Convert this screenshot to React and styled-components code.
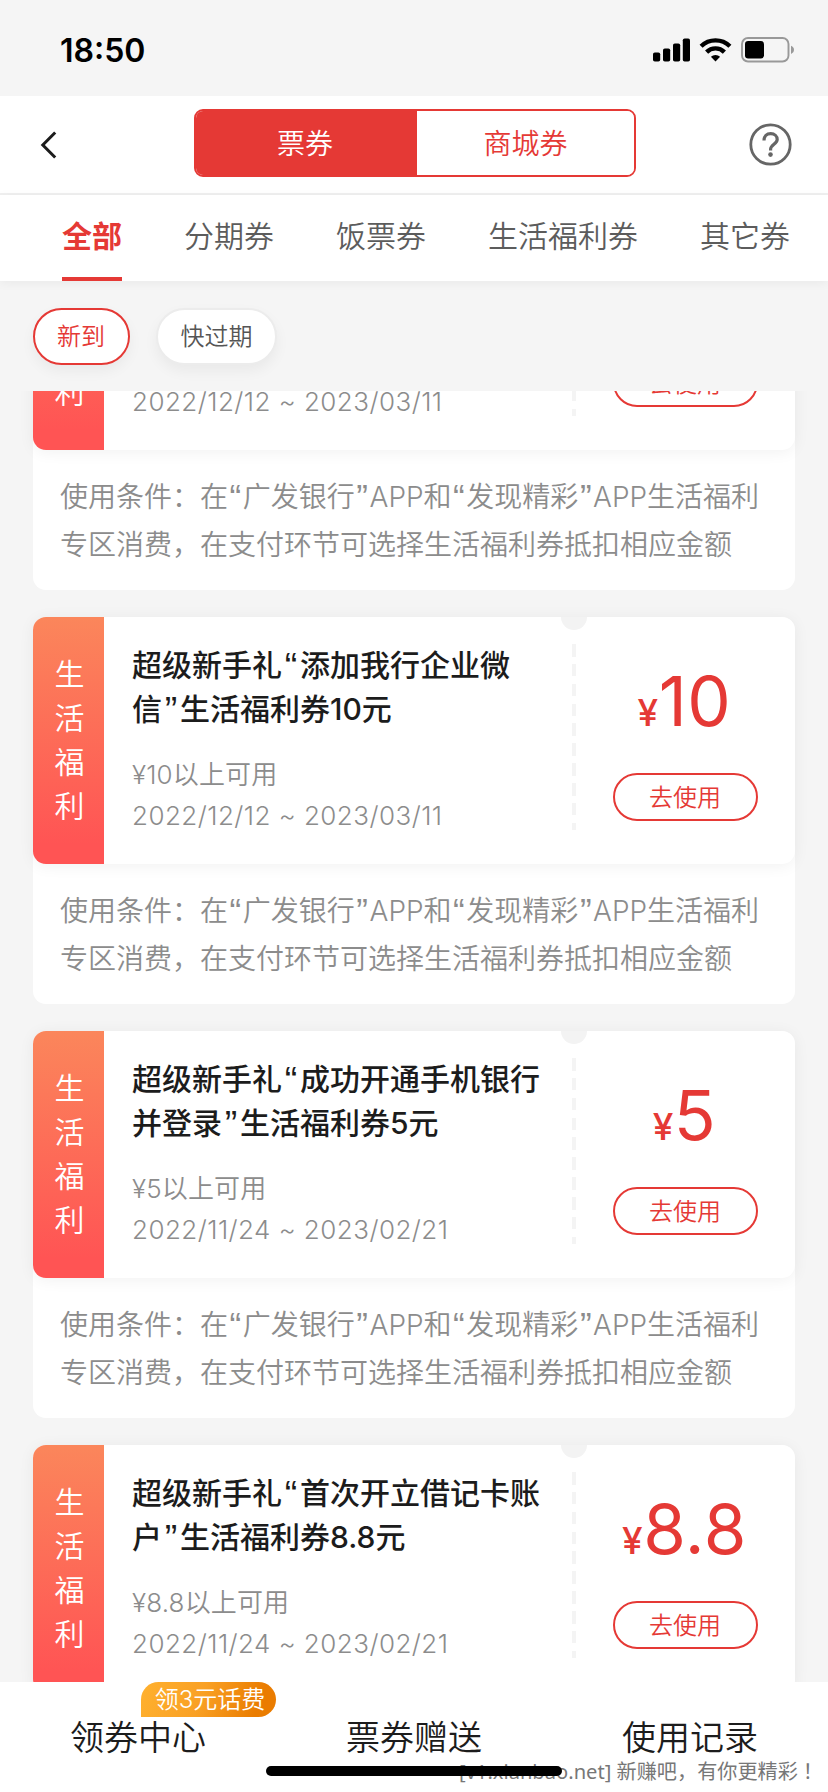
import React from "react";
import styled, { createGlobalStyle } from "styled-components";

const RED = "#e53935";

const Global = createGlobalStyle`
  *, *::before, *::after { box-sizing: border-box; }
  html, body { margin: 0; padding: 0; background: #f5f5f5; }
  body { font-family: Inter, "Noto Sans CJK SC", sans-serif; overflow: hidden; }
  button { font-family: inherit; margin: 0; padding: 0; background: none; border: 0; }
`;

const Screen = styled.div`
  width: 828px;
  height: 1792px;
  display: flex;
  flex-direction: column;
  overflow: hidden;
  background: #f5f5f5;
  position: relative;
`;

const StatusBar = styled.div`
  flex: none;
  height: 96px;
  padding: 3px 33px 0 60px;
  display: flex;
  align-items: center;
  justify-content: space-between;
`;

const Clock = styled.div`
  padding-top: 2px;
  font-size: 32px;
  font-weight: 600;
  color: #000;
`;

const StatusIcons = styled.div`
  display: flex;
  align-items: center;
  gap: 9px;
  svg { display: block; }
`;

const Header = styled.header`
  flex: none;
  height: 99px;
  padding: 0 36px 0 40px;
  background: #fff;
  border-bottom: 2px solid #f0f0f0;
  display: flex;
  align-items: center;
  justify-content: space-between;
`;

const IconButton = styled.button`
  width: 43px;
  height: 43px;
  display: flex;
  align-items: center;
  justify-content: ${(p) => p.$align || "center"};
  svg { display: block; }
`;

const Segmented = styled.div`
  width: 442px;
  height: 68px;
  margin: 0 auto 3px 111px;
  display: flex;
  border: 2px solid ${RED};
  border-radius: 9px;
  overflow: hidden;
`;

const Segment = styled.button`
  flex: ${(p) => (p.$active ? "0 0 221px" : "1")};
  font-size: 28px;
  font-weight: 350;
  padding: 0 ${(p) => (p.$active ? 3 : 0)}px 2px 0;
  color: ${(p) => (p.$active ? "#fff" : RED)};
  background: ${(p) => (p.$active ? RED : "#fff")};
`;

const Tabs = styled.nav`
  flex: none;
  height: 86px;
  padding-left: 62px;
  background: #fff;
  display: flex;
  gap: 62px;
  box-shadow: 0 2px 10px rgba(0, 0, 0, 0.05);
`;

const Tab = styled.button`
  flex: none;
  font-size: 30px;
  font-weight: ${(p) => (p.$active ? 600 : 350)};
  color: ${(p) => (p.$active ? RED : "#5c5c5c")};
  padding: 0 0 5px;
  border-bottom: 4px solid ${(p) => (p.$active ? RED : "transparent")};
`;

const Filters = styled.div`
  flex: none;
  height: 110px;
  padding: 27px 33px 0;
  display: flex;
  align-items: flex-start;
  gap: 26px;
`;

const Chip = styled.button`
  height: 57px;
  padding: 0 ${(p) => (p.$active ? 23 : 22.5)}px 4px ${(p) => (p.$active ? 22 : 22.5)}px;
  border: 2px solid ${(p) => (p.$active ? RED : "#ececec")};
  border-radius: 29px;
  background: #fff;
  font-size: 24px;
  font-weight: 350;
  color: ${(p) => (p.$active ? RED : "#555")};
  box-shadow: 0 6px 14px rgba(0, 0, 0, 0.05);
`;

const List = styled.main`
  flex: 1;
  min-height: 0;
  overflow: hidden;
  padding: 0 33px;
`;

const Cards = styled.div`
  margin-top: -188px;
  display: flex;
  flex-direction: column;
  gap: 27px;
`;

const Card = styled.article`
  flex: none;
  height: 387px;
  border-radius: 13px;
  background: #fff;
`;

const Coupon = styled.div`
  height: 247px;
  display: flex;
  border-radius: 13px;
  background: #fff;
  box-shadow: 0 2px 16px rgba(0, 0, 0, 0.06);
`;

const Category = styled.div`
  flex: none;
  width: 71px;
  padding: 0 0 1px 2px;
  border-radius: 13px 0 0 13px;
  background: linear-gradient(180deg, #fb865b 0%, #ff5454 92%);
  color: #fff;
  font-size: 30px;
  font-weight: 350;
  line-height: 44px;
  display: flex;
  flex-direction: column;
  align-items: center;
  justify-content: center;
`;

const Details = styled.div`
  flex: none;
  width: 457px;
  padding: 26px 0 0 28px;
  white-space: nowrap;
`;

const Title = styled.h2`
  margin: 0 0 24px;
  font-size: 30px;
  font-weight: 500;
  line-height: 44px;
  color: #1c1c1c;
`;

const Meta = styled.div`
  font-size: 26px;
  font-weight: 350;
  line-height: 40.5px;
  color: #8c8c8c;
  letter-spacing: ${(p) => p.$spacing || 0}px;
`;

const Quote = styled.span`
  display: inline-block;
  width: ${(p) => p.$width}px;
  font-family: "Liberation Sans", sans-serif;
  font-size: 1.25em;
  line-height: 0.8;
  vertical-align: -0.07em;
  text-align: center;
`;

const Perforation = styled.div`
  flex: none;
  width: 26px;
  display: flex;
  flex-direction: column;
  align-items: center;
`;

const Notch = styled.div`
  width: 26px;
  height: 13px;
  border-radius: 0 0 13px 13px;
  background: #f3f3f3;
  margin-bottom: 14px;
`;

const Dashes = styled.div`
  width: 4px;
  height: 186px;
  background: repeating-linear-gradient(180deg, #f4f4f4 0 12.6px, transparent 12.6px 19.85px);
`;

const Action = styled.div`
  flex: 1;
  padding-right: 12px;
  display: flex;
  flex-direction: column;
  align-items: center;
`;

const Price = styled.div`
  height: 156px;
  padding: 42px 1px 0 0;
  color: ${RED};
  font-size: 69px;
  line-height: 84px;
  letter-spacing: 0.6px;
  white-space: nowrap;
`;

const Yen = styled.span`
  font-size: 37px;
  font-weight: 500;
  letter-spacing: 0.6px;
`;

const UseButton = styled.button`
  width: 145px;
  height: 48px;
  padding-bottom: 4px;
  border: 2px solid ${RED};
  border-radius: 24px;
  color: ${RED};
  font-size: 24px;
  font-weight: 350;
`;

const Terms = styled.p`
  margin: 0;
  padding: 23px 0 0 27px;
  font-size: 28px;
  font-weight: 350;
  line-height: 48.3px;
  color: #8c8c8c;
  white-space: nowrap;
`;

const BottomBar = styled.footer`
  flex: none;
  height: 110px;
  background: #fff;
  display: grid;
  grid-template-columns: repeat(3, 276px);
  position: relative;
`;

const BottomItem = styled.button`
  position: relative;
  height: 110px;
  font-size: 34px;
  font-weight: 350;
  color: #1c1c1c;
  padding-bottom: 3px;
`;

const Promo = styled.span`
  position: absolute;
  left: 141px;
  top: 0;
  width: 135px;
  height: 35px;
  padding-left: 3px;
  border-radius: 18px 18px 18px 0;
  background: linear-gradient(110deg, #ffb12f 0%, #f9a024 45%, #ea7c00 85%);
  color: #fff;
  font-size: 24px;
  line-height: 36px;
  text-align: center;
`;

const Watermark = styled.div`
  position: absolute;
  left: 459px;
  top: 74px;
  font-family: "Noto Sans", "Noto Sans CJK SC", sans-serif;
  font-size: 20.15px;
  font-weight: 400;
  line-height: 30px;
  color: #777;
  white-space: nowrap;
`;

const CenteredMark = styled.span`
  font-family: "Noto Sans CJK TC", sans-serif;
`;

const HomeIndicator = styled.div`
  position: absolute;
  left: 266px;
  top: 84px;
  width: 296px;
  height: 10px;
  border-radius: 5px;
  background: #000;
`;

const SignalIcon = () => (
  <svg width="37" height="24" viewBox="0 0 37 24">
    <rect x="0" y="14.5" width="7.2" height="9" rx="1.8" />
    <rect x="10" y="10.5" width="7.2" height="13" rx="1.8" />
    <rect x="20" y="5.5" width="7.2" height="18" rx="1.8" />
    <rect x="29.8" y="0.5" width="7.2" height="23" rx="1.8" />
  </svg>
);

const WifiIcon = () => (
  <svg width="33" height="24" viewBox="0 0 33 24" fill="none" stroke="#000" strokeWidth="4.4">
    <path d="M2.1 8.2 A20.6 20.6 0 0 1 30.9 8.2" />
    <path d="M7.6 14.1 A12.6 12.6 0 0 1 25.4 14.1" />
    <path d="M16.5 23.5 L11.9 18.8 A6.6 6.6 0 0 1 21.1 18.8 Z" fill="#000" stroke="none" />
  </svg>
);

const BatteryIcon = () => (
  <svg width="54" height="26" viewBox="0 0 54 26">
    <rect x="1" y="1" width="46.5" height="23.5" rx="6" fill="none" stroke="#999" strokeWidth="1.9" />
    <rect x="4" y="4" width="19" height="17.5" rx="3.2" />
    <path d="M50 8.7 Q53 10 53 12.8 Q53 15.6 50 16.9 Z" fill="#999" />
  </svg>
);

const BackIcon = () => (
  <svg width="18" height="28" viewBox="0 0 18 28" fill="none" stroke="#1c1c1c" strokeWidth="3">
    <path d="M15.2 1.5 L2.8 14 L15.2 26.5" />
  </svg>
);

const HelpIcon = () => (
  <svg width="43" height="43" viewBox="0 0 43 43" fill="none" stroke="#666" strokeWidth="2.8">
    <circle cx="21.5" cy="21.5" r="19.7" />
    <path
      d="M15 17.5 C15 13 17.8 10.7 21.7 10.7 C25.6 10.7 28.2 13.2 28.2 16.5 C28.2 20.8 21.6 21.6 21.6 26.2 V27.6"
      strokeWidth="3.2"
    />
    <circle cx="21.5" cy="31.6" r="2.3" fill="#666" stroke="none" />
  </svg>
);

const coupons = [
  { title: ["超级新手礼“添加我行企业微", "信”生活福利券10元"], amount: "10", dates: "2022/12/12 ~ 2023/03/11" },
  { title: ["超级新手礼“添加我行企业微", "信”生活福利券10元"], amount: "10", dates: "2022/12/12 ~ 2023/03/11" },
  { title: ["超级新手礼“成功开通手机银行", "并登录”生活福利券5元"], amount: "5", dates: "2022/11/24 ~ 2023/02/21" },
  { title: ["超级新手礼“首次开立借记卡账", "户”生活福利券8.8元"], amount: "8.8", dates: "2022/11/24 ~ 2023/02/21" },
];

const terms = ["使用条件：在“广发银行”APP和“发现精彩”APP生活福利", "专区消费，在支付环节可选择生活福利券抵扣相应金额"];

const tabs = ["全部", "分期券", "饭票券", "生活福利券", "其它券"];

/* Text line whose curly quotes sit in cells of a fixed width. */
function Quoted({ text, width }) {
  return text
    .split(/([“”])/)
    .map((part, i) => (i % 2 ? <Quote key={i} $width={width}>{part}</Quote> : part));
}

function CouponCard({ title, amount, dates }) {
  return (
    <Card>
      <Coupon>
        <Category>
          {[..."生活福利"].map((c) => (
            <span key={c}>{c}</span>
          ))}
        </Category>
        <Details>
          <Title>
            <Quoted text={title[0]} width={18} />
            <br />
            <Quoted text={title[1]} width={18} />
          </Title>
          <Meta $spacing={0.15}>¥{amount}以上可用</Meta>
          <Meta $spacing={0.45}>{dates}</Meta>
        </Details>
        <Perforation>
          <Notch />
          <Dashes />
        </Perforation>
        <Action>
          <Price>
            <Yen>¥</Yen>
            {amount}
          </Price>
          <UseButton>去使用</UseButton>
        </Action>
      </Coupon>
      <Terms>
        <Quoted text={terms[0]} width={14.75} />
        <br />
        {terms[1]}
      </Terms>
    </Card>
  );
}

export default function App() {
  return (
    <>
      <Global />
      <Screen>
        <StatusBar>
          <Clock>18:50</Clock>
          <StatusIcons>
            <SignalIcon />
            <WifiIcon />
            <BatteryIcon />
          </StatusIcons>
        </StatusBar>
        <Header>
          <IconButton $align="flex-start" aria-label="返回">
            <BackIcon />
          </IconButton>
          <Segmented>
            <Segment $active>票券</Segment>
            <Segment>商城券</Segment>
          </Segmented>
          <IconButton aria-label="帮助">
            <HelpIcon />
          </IconButton>
        </Header>
        <Tabs>
          {tabs.map((t, i) => (
            <Tab key={t} $active={i === 0}>
              {t}
            </Tab>
          ))}
        </Tabs>
        <Filters>
          <Chip $active>新到</Chip>
          <Chip>快过期</Chip>
        </Filters>
        <List>
          <Cards>
            {coupons.map((c, i) => (
              <CouponCard key={i} {...c} />
            ))}
          </Cards>
        </List>
        <BottomBar>
          <BottomItem>
            领券中心
            <Promo>领3元话费</Promo>
          </BottomItem>
          <BottomItem>票券赠送</BottomItem>
          <BottomItem>使用记录</BottomItem>
          <Watermark>
            [v1.xianbao.net] 新赚吧，有你更精彩<CenteredMark>！</CenteredMark>
          </Watermark>
          <HomeIndicator />
        </BottomBar>
      </Screen>
    </>
  );
}
